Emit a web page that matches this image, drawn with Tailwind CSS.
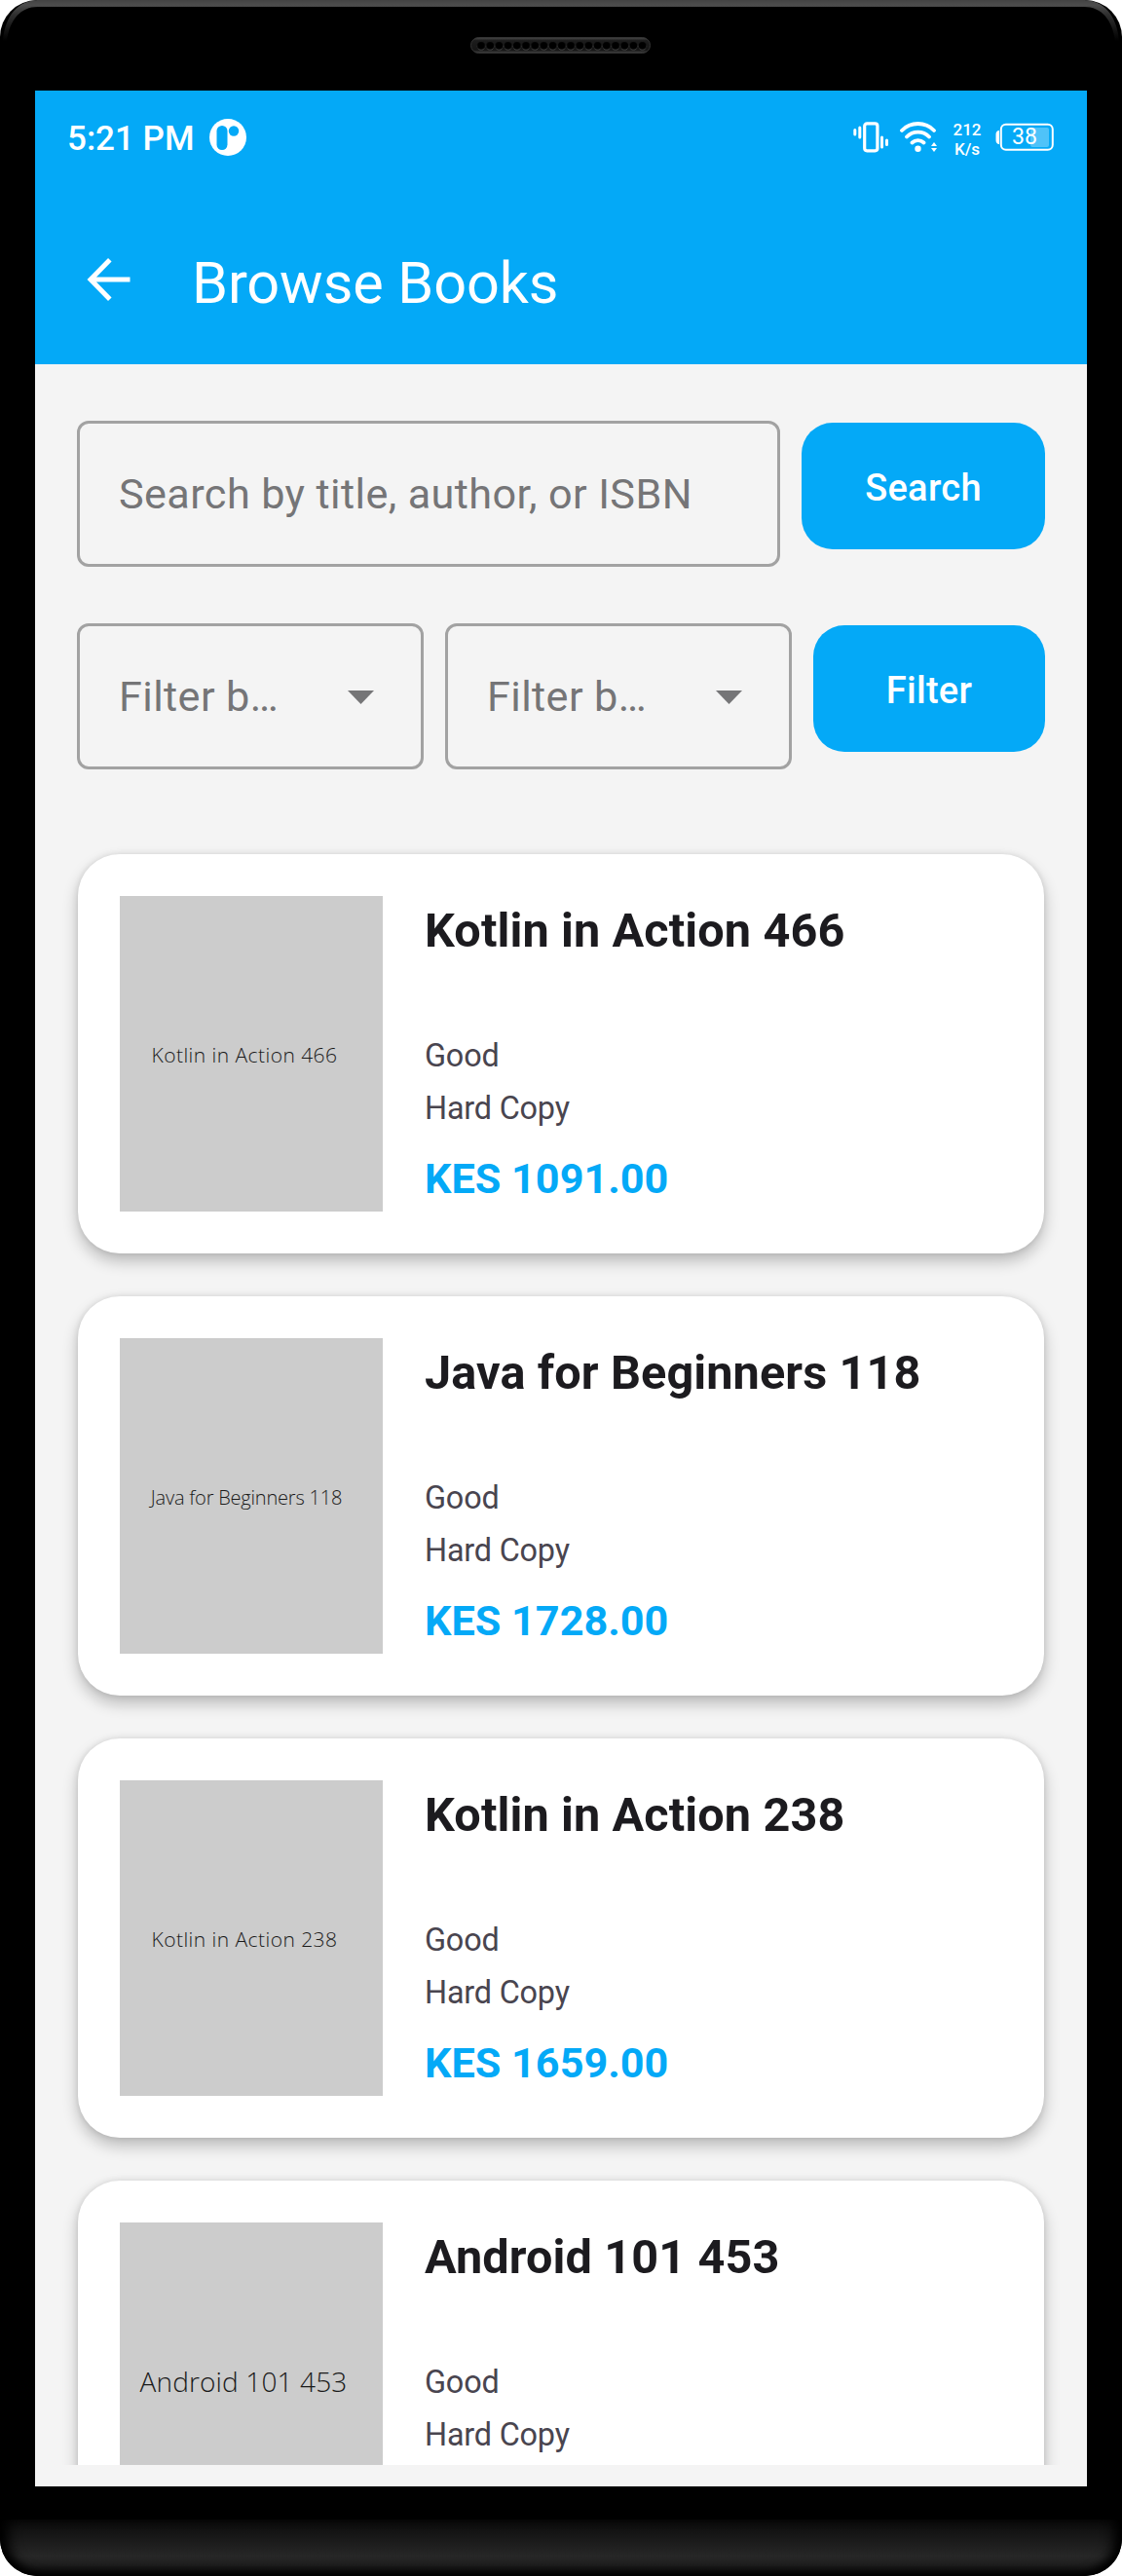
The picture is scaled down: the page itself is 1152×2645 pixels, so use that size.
<!DOCTYPE html>
<html lang="en">
<head>
  <meta charset="UTF-8" />
  <meta name="viewport" content="width=device-width, initial-scale=1" />
  <title>Browse Books</title>
  <script src="https://cdn.jsdelivr.net/npm/@tailwindcss/browser@4"></script>
</head>
<body class="bg-white font-['Roboto',sans-serif]">

  <!-- Phone -->
  <div class="relative flex h-[2645px] w-[1152px] flex-col overflow-hidden rounded-[38px] bg-black">

    <!-- Top bezel -->
    <div class="relative h-[93px] shrink-0">
      <svg class="absolute left-0 top-0" width="1152" height="93" viewBox="0 0 1152 93">
        <defs>
          <linearGradient id="rim" x1="0" y1="0" x2="0" y2="1">
            <stop offset="0" stop-color="#434343" />
            <stop offset="0.12" stop-color="#4d4d4d" />
            <stop offset="0.35" stop-color="#303030" />
            <stop offset="1" stop-color="#000" />
          </linearGradient>
          <linearGradient id="speaker" x1="0" y1="0" x2="0" y2="1">
            <stop offset="0" stop-color="#4a4a4a" />
            <stop offset="0.2" stop-color="#1c1c1c" />
            <stop offset="0.8" stop-color="#151515" />
            <stop offset="1" stop-color="#444" />
          </linearGradient>
          <pattern id="holes" x="489.4" y="41" width="9.2" height="12" patternUnits="userSpaceOnUse">
            <circle cx="4.6" cy="6.6" r="4" fill="#4a4a4a" />
            <circle cx="4.6" cy="5.8" r="3.9" fill="#000" />
          </pattern>
        </defs>
        <path d="M3 42C5 16 19 0 39 0H1113C1133 0 1147 16 1149 42H1145C1142 20 1131 7 1113 7H39C21 7 10 20 7 42Z" fill="url(#rim)" />
        <rect x="483.5" y="38.5" width="184" height="16" rx="8" fill="url(#speaker)" stroke="#333" />
        <rect x="489.4" y="41" width="174.8" height="12" fill="url(#holes)" />
      </svg>
    </div>

    <!-- Screen -->
    <div class="mx-9 flex h-[2460px] shrink-0 flex-col bg-[#f4f4f4]">

      <!-- Header -->
      <header class="h-[281px] shrink-0 bg-[#04a9f7] text-white">
        <div class="flex h-24 items-center pl-[33px] pr-[34px]">
          <span class="pt-[3px] text-[35px] font-medium leading-none">5:21 PM</span>
          <svg class="ml-[15px]" width="38" height="38" viewBox="0 0 38 38">
            <circle cx="19" cy="19" r="19" fill="#fff" />
            <rect x="7.5" y="7" width="11" height="25" rx="5.5" fill="#04a9f7" />
            <circle cx="25" cy="12.5" r="5.2" fill="#04a9f7" />
          </svg>
          <div class="ml-auto flex items-center">
            <!-- Vibrate -->
            <svg width="37" height="32" viewBox="0 0 37 32" fill="none" stroke="#fff" stroke-linecap="round">
              <rect x="11.7" y="1.8" width="13.2" height="28" rx="2.5" stroke-width="3.2" />
              <path d="M1.8 8.5V13M6.8 6V16M29.5 16V26M34.5 19V23.5" stroke-width="3" />
            </svg>
            <!-- Wifi -->
            <svg class="ml-[11px]" width="38" height="32" viewBox="0 0 38 32" fill="none" stroke="#fff" stroke-width="3.8" stroke-linecap="round">
              <path d="M2 9A23 23 0 0 1 35 9M7 15.5A16 16 0 0 1 30 15.5M12.5 21.5A9 9 0 0 1 24.5 21.5" />
              <circle cx="18.5" cy="27.8" r="3.2" fill="#fff" stroke="none" />
              <path d="M32 25L35 21L38 25ZM32 27L35 31L38 27Z" fill="#fff" stroke="none" />
            </svg>
            <div class="ml-[15px] flex w-[32px] flex-col pt-[3px] text-center text-[17px] font-medium leading-5">
              <span>212</span>
              <span>K/s</span>
            </div>
            <!-- Battery -->
            <div class="relative ml-[13px]">
              <svg width="60" height="30" viewBox="0 0 60 30">
                <path d="M4 8V22C1.5 22 .5 20 .5 18V12C.5 10 1.5 8 4 8Z" fill="#fff" />
                <rect x="5.8" y="1.8" width="53" height="26" rx="5" fill="none" stroke="#fff" stroke-width="2" />
                <rect x="36" y="5" width="19" height="20" rx="2" fill="#fff" fill-opacity=".3" />
              </svg>
              <span class="absolute left-[17px] top-[3px] text-[23px] leading-6">38</span>
            </div>
          </div>
        </div>

        <div class="flex h-[202px] items-center pl-[53px]">
          <svg class="-mt-[6px]" width="45" height="44" viewBox="0 0 45 44" fill="none" stroke="#fff" stroke-width="5">
            <path d="M44.500 22H5M23.800 1.800L4 22L23.800 42.200" />
          </svg>
          <h1 class="ml-[63px] pt-[3px] text-[59.4px] leading-none tracking-[-0.1px]">Browse Books</h1>
        </div>
      </header>

      <!-- Search -->
      <div class="flex items-start justify-between pl-[43px] pr-[43px] pt-[58px]">
        <div class="flex h-[150px] w-[722px] items-center rounded-[12px] border-3 border-[#a2a2a2] pl-[40px] pt-[2px] text-[43.2px] tracking-[0.4px] text-[#757577]">Search by title, author, or ISBN</div>
        <button class="mt-[2px] h-[130px] w-[250px] rounded-[32px] bg-[#04a9f7] pt-[5px] text-[38px] font-medium tracking-[0.3px] text-white">Search</button>
      </div>

      <!-- Filters -->
      <div class="flex items-start justify-between pl-[43px] pr-[43px] pt-[58px]">
        <div class="flex h-[150px] w-[356px] items-center justify-between rounded-[12px] border-3 border-[#a2a2a2] pl-[40px] pr-12 pt-[2px] text-[43.2px] tracking-[0.4px] text-[#757577]">
          <span>Filter b…</span>
          <svg width="27" height="14" viewBox="0 0 27 14"><path d="M0 0H27L13.500 14Z" fill="#757577" /></svg>
        </div>
        <div class="flex h-[150px] w-[356px] items-center justify-between rounded-[12px] border-3 border-[#a2a2a2] pl-[40px] pr-12 pt-[2px] text-[43.2px] tracking-[0.4px] text-[#757577]">
          <span>Filter b…</span>
          <svg width="27" height="14" viewBox="0 0 27 14"><path d="M0 0H27L13.500 14Z" fill="#757577" /></svg>
        </div>
        <button class="mt-[2px] h-[130px] w-[238px] rounded-[32px] bg-[#04a9f7] pt-[5px] text-[38px] font-medium tracking-[0.3px] text-white">Filter</button>
      </div>

      <!-- Books -->
      <main class="mt-[65px] flex h-[1676px] flex-col gap-11 overflow-hidden px-11 pt-[22px]">
        <article class="flex h-[410px] shrink-0 rounded-[43px] bg-white p-[43px] shadow-[0_8px_16px_rgba(0,0,0,0.24),0_0_6px_rgba(0,0,0,0.1)]">
          <div class="flex h-[324px] w-[270px] shrink-0 items-center justify-center bg-[#ccc] pr-[14px] pt-[3px] font-['Open_Sans',sans-serif] text-[21px] font-light tracking-[0.45px] text-[#1a1a1a]">Kotlin in Action 466</div>
          <div class="ml-[43px] flex flex-col">
            <h2 class="mt-[6px] text-[48.6px] font-bold leading-[60px] tracking-[0.12px] text-[#1c1b1f]">Kotlin in Action 466</h2>
            <p class="mt-[71px] text-[32.4px] leading-[54px] tracking-[-0.2px] text-[#49454f]">Good</p>
            <p class="text-[32.4px] leading-[54px] tracking-[-0.2px] text-[#49454f]">Hard Copy</p>
            <p class="mt-[16px] text-[43.2px] font-bold leading-[60px] text-[#04a9f7]">KES 1091.00</p>
          </div>
        </article>

        <article class="flex h-[410px] shrink-0 rounded-[43px] bg-white p-[43px] shadow-[0_8px_16px_rgba(0,0,0,0.24),0_0_6px_rgba(0,0,0,0.1)]">
          <div class="flex h-[324px] w-[270px] shrink-0 items-center justify-center bg-[#ccc] pr-[10px] pt-[4px] font-['Open_Sans',sans-serif] text-[20px] font-light tracking-[-0.2px] text-[#1a1a1a]">Java for Beginners 118</div>
          <div class="ml-[43px] flex flex-col">
            <h2 class="mt-[6px] text-[48.6px] font-bold leading-[60px] tracking-[0.12px] text-[#1c1b1f]">Java for Beginners 118</h2>
            <p class="mt-[71px] text-[32.4px] leading-[54px] tracking-[-0.2px] text-[#49454f]">Good</p>
            <p class="text-[32.4px] leading-[54px] tracking-[-0.2px] text-[#49454f]">Hard Copy</p>
            <p class="mt-[16px] text-[43.2px] font-bold leading-[60px] text-[#04a9f7]">KES 1728.00</p>
          </div>
        </article>

        <article class="flex h-[410px] shrink-0 rounded-[43px] bg-white p-[43px] shadow-[0_8px_16px_rgba(0,0,0,0.24),0_0_6px_rgba(0,0,0,0.1)]">
          <div class="flex h-[324px] w-[270px] shrink-0 items-center justify-center bg-[#ccc] pr-[14px] pt-[3px] font-['Open_Sans',sans-serif] text-[21px] font-light tracking-[0.45px] text-[#1a1a1a]">Kotlin in Action 238</div>
          <div class="ml-[43px] flex flex-col">
            <h2 class="mt-[6px] text-[48.6px] font-bold leading-[60px] tracking-[0.12px] text-[#1c1b1f]">Kotlin in Action 238</h2>
            <p class="mt-[71px] text-[32.4px] leading-[54px] tracking-[-0.2px] text-[#49454f]">Good</p>
            <p class="text-[32.4px] leading-[54px] tracking-[-0.2px] text-[#49454f]">Hard Copy</p>
            <p class="mt-[16px] text-[43.2px] font-bold leading-[60px] text-[#04a9f7]">KES 1659.00</p>
          </div>
        </article>

        <article class="flex h-[410px] shrink-0 rounded-[43px] bg-white p-[43px] shadow-[0_8px_16px_rgba(0,0,0,0.24),0_0_6px_rgba(0,0,0,0.1)]">
          <div class="flex h-[324px] w-[270px] shrink-0 items-center justify-center bg-[#ccc] pr-[16px] pt-[1px] font-['Open_Sans',sans-serif] text-[28px] font-light tracking-[0.15px] text-[#1a1a1a]">Android 101 453</div>
          <div class="ml-[43px] flex flex-col">
            <h2 class="mt-[6px] text-[48.6px] font-bold leading-[60px] tracking-[0.12px] text-[#1c1b1f]">Android 101 453</h2>
            <p class="mt-[71px] text-[32.4px] leading-[54px] tracking-[-0.2px] text-[#49454f]">Good</p>
            <p class="text-[32.4px] leading-[54px] tracking-[-0.2px] text-[#49454f]">Hard Copy</p>
          </div>
        </article>
      </main>
    </div>

    <!-- Bottom bezel -->
    <div class="mt-[34px] h-[58px] rounded-b-[38px] bg-linear-to-b from-[#0b0b0b] via-[#272727] via-65% to-[#151515] shadow-[inset_0_-5px_10px_#000,inset_14px_0_14px_-6px_#000,inset_-14px_0_14px_-6px_#000]"></div>
  </div>

</body>
</html>
